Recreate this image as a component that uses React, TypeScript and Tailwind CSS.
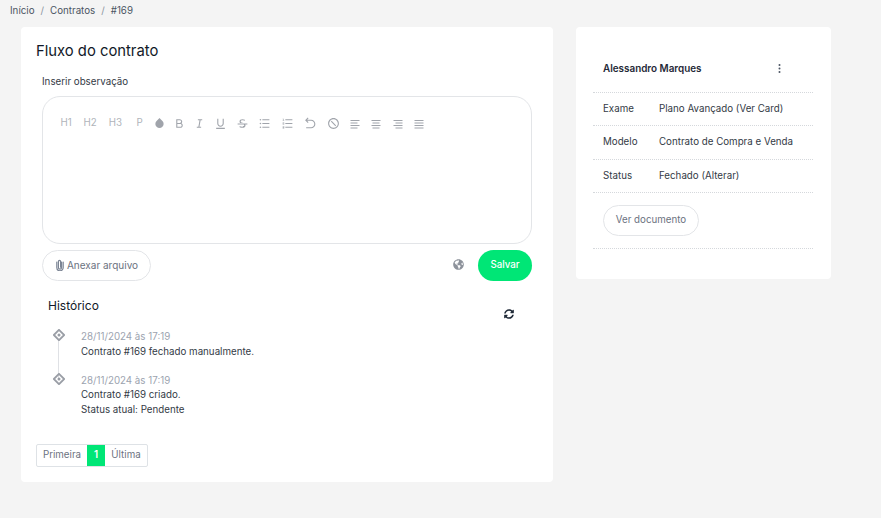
import { RiAlignCenter, RiAlignJustify, RiAlignLeft, RiAlignRight, RiArrowGoBackLine, RiBold, RiDropFill, RiForbidLine, RiItalic, RiListOrdered, RiListUnordered, RiStrikethrough, RiUnderline } from 'react-icons/ri'
import { FaGlobeAmericas, FaSyncAlt } from 'react-icons/fa'

const headings = [
  { label: 'H1', cell: 'w-[24px]' },
  { label: 'H2', cell: 'w-[24px]' },
  { label: 'H3', cell: 'w-[27px]' },
  { label: 'P', cell: 'w-[21px]' },
]

const toolIcons = [
  { Icon: RiDropFill, cell: 'w-[18px]', size: 11 },
  { Icon: RiBold, cell: 'w-[22px]', size: 13 },
  { Icon: RiItalic, cell: 'w-[18px]', size: 13 },
  { Icon: RiUnderline, cell: 'w-[24px]', size: 13 },
  { Icon: RiStrikethrough, cell: 'w-[20px]', size: 13 },
  { Icon: RiListUnordered, cell: 'w-[24px]', size: 13 },
  { Icon: RiListOrdered, cell: 'w-[22px]', size: 13 },
  { Icon: RiArrowGoBackLine, cell: 'w-[24px]', size: 13 },
  { Icon: RiForbidLine, cell: 'w-[22px]', size: 13 },
  { Icon: RiAlignLeft, cell: 'w-[22px]', size: 12 },
  { Icon: RiAlignCenter, cell: 'w-[20px]', size: 12 },
  { Icon: RiAlignRight, cell: 'w-[24px]', size: 12 },
  { Icon: RiAlignJustify, cell: 'w-[18px]', size: 12 },
]

const details = [
  { label: 'Exame', value: 'Plano Avançado (Ver Card)' },
  { label: 'Modelo', value: 'Contrato de Compra e Venda' },
  { label: 'Status', value: 'Fechado (Alterar)' },
]

function TimelineMark() {
  return (
    <svg width="12" height="12" viewBox="0 0 12 12" className="text-[#9a9ea6]">
      <path d="M6 .8 11.2 6 6 11.2.8 6Z" fill="none" stroke="currentColor" strokeWidth="1.8" />
      <circle cx="6" cy="6" r="1.5" fill="currentColor" />
    </svg>
  )
}

function Clip() {
  return (
    <svg width="8" height="12" viewBox="0 0 8 12" fill="none" stroke="#7b8494" strokeWidth="1.2" strokeLinecap="round">
      <path d="M5.6 3v5.6a1.6 1.6 0 0 1-3.2 0V2.4a1.1 1.1 0 0 1 2.2 0v5.8" />
      <path d="M7.2 3v5.6a3.2 3.2 0 0 1-6.4 0V3" />
    </svg>
  )
}

export default function App() {
  return (
    <div className="h-[518px] w-[881px] overflow-hidden bg-[#f4f4f4] font-['Inter',sans-serif] text-[9.75px] text-[#333a45]">
      {/* Breadcrumb */}
      <div className="flex h-[27px] items-start gap-[6px] px-[10px] pt-[4px] leading-[13px] text-[#4b5563]">
        <span>Início</span>
        <span className="text-[#8a93a0]">/</span>
        <span>Contratos</span>
        <span className="text-[#8a93a0]">/</span>
        <span>#169</span>
      </div>

      <div className="flex items-start pl-[21px]">
        {/* Main card */}
        <div className="h-[455px] w-[532px] rounded-[4px] bg-white pl-[15px] pr-[21px] pt-[14px]">
          <h1 className="text-[14.8px] font-normal leading-[20px] text-[#111827]">Fluxo do contrato</h1>
          <div className="pl-[6px]">
            <p className="mt-[14px] leading-[13px]">Inserir observação</p>
            <div className="mt-[8px] h-[148px] rounded-[18px] border border-[#e3e5e8] px-[11px] pt-[20px]">
              <div className="flex h-[13px] items-center text-[#b0b4ba]">
                {headings.map((h) => (
                  <span key={h.label} className={`${h.cell} text-center`}>{h.label}</span>
                ))}
                {toolIcons.map(({ Icon, cell, size }, i) => (
                  <span key={i} className={`${cell} flex justify-center`}>
                    <Icon size={size} className="text-[#a0a4ab]" />
                  </span>
                ))}
              </div>
            </div>
            <div className="mt-[6px] flex items-center">
              <button className="flex h-[31px] w-[109px] items-center justify-center gap-[3px] rounded-full border border-[#e3e5e8] pb-[1px] pl-[1px] text-[10px] text-[#6b7280]">
                <Clip />
                Anexar arquivo
              </button>
              <FaGlobeAmericas size={11} className="ml-auto mr-[14px] mb-[3px] text-[#8d929b]" />
              <button className="flex h-[31px] w-[54px] items-center justify-center rounded-full bg-[#00e676] pb-[1px] font-medium text-white">
                Salvar
              </button>
            </div>
            <div className="mt-[15px] flex h-[34px] items-start justify-between pl-[6px] pr-[18px]">
              <h2 className="text-[12px] font-normal leading-[20px] text-[#111827]">Histórico</h2>
              <FaSyncAlt size={10} className="mt-[13px] text-[#1f2937]" />
            </div>
          </div>
          <div className="relative pl-[45px] leading-[14.6px]">
            <div className="absolute left-[21.5px] top-[10px] h-[38px] w-px bg-[#dfe1e5]" />
            <div className="absolute left-[17px] top-[-1px]"><TimelineMark /></div>
            <div className="absolute left-[17px] top-[43px]"><TimelineMark /></div>
            <p className="text-[#9ca3af]">28/11/2024 às 17:19</p>
            <p>Contrato #169 fechado manualmente.</p>
            <p className="mt-[14.4px] text-[#9ca3af]">28/11/2024 às 17:19</p>
            <p>Contrato #169 criado.</p>
            <p>Status atual: Pendente</p>
          </div>
          <div className="mt-[27px] flex h-[23px] w-[112px] items-stretch overflow-hidden rounded-[2px] border border-[#dee2e6] leading-[20px] text-[#6b7280]">
            <span className="w-[50px] text-center">Primeira</span>
            <span className="w-[18px] bg-[#00e676] text-center font-semibold text-white">1</span>
            <span className="flex-1 text-center">Última</span>
          </div>
        </div>

        {/* Side card */}
        <div className="ml-[23px] h-[252px] w-[255px] rounded-[4px] bg-white pl-[17px] pr-[18px]">
          <div className="flex h-[66px] items-center justify-between border-b border-dotted border-[#d5d8dc] pl-[10px] pr-[32px] pt-[18px]">
            <span className="text-[9.9px] font-semibold text-[#1f2937]">Alessandro Marques</span>
            <svg width="3" height="9" viewBox="0 0 3 9" fill="#4b5563">
              <circle cx="1.5" cy="1" r="1" />
              <circle cx="1.5" cy="4.5" r="1" />
              <circle cx="1.5" cy="8" r="1" />
            </svg>
          </div>
          {details.map((row) => (
            <div key={row.label} className="flex h-[33.4px] items-center border-b border-dotted border-[#d5d8dc] pl-[10px]">
              <span className="w-[56px]">{row.label}</span>
              <span>{row.value}</span>
            </div>
          ))}
          <div className="flex h-[56px] items-center border-b border-dotted border-[#d5d8dc] pl-[10px]">
            <button className="h-[31px] w-[96px] rounded-full border border-[#e3e5e8] text-[#6b7280]">Ver documento</button>
          </div>
        </div>
      </div>
    </div>
  )
}
